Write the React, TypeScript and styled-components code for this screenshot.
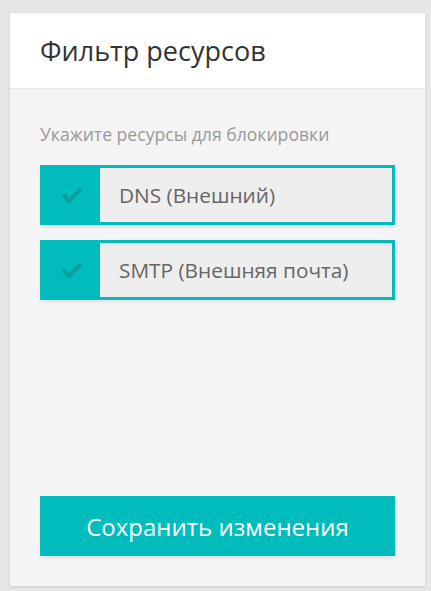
import { FC } from "react";
import styled, { createGlobalStyle } from "styled-components";

const teal = "#00bcbc";

const GlobalStyle = createGlobalStyle`
	html, body {
		margin: 0;
		padding: 0;
		background: #e6e6e6;
		font-family: "Open Sans", "Liberation Sans", sans-serif;
	}
	* { box-sizing: border-box; }
`;

const resources = [
	{ id: "dns", label: "DNS (Внешний)", checked: true },
	{ id: "smtp", label: "SMTP (Внешняя почта)", checked: true },
];

const CheckIcon: FC = () => (
	<svg width="22" height="18" viewBox="0 0 22 18">
		<path
			d="M2 9 L8 15 L20 3"
			fill="none"
			stroke="#0c9d9d"
			strokeWidth="4"
			strokeLinecap="butt"
			strokeLinejoin="miter"
		/>
	</svg>
);

const App: FC = () => {
	return (
		<Page>
			<GlobalStyle />
			<Card>
				<Header>
					<Title>Фильтр ресурсов</Title>
				</Header>
				<Body>
					<Hint>Укажите ресурсы для блокировки</Hint>
					<List>
						{resources.map((r) => (
							<Option key={r.id}>
								<CheckBox>{r.checked && <CheckIcon />}</CheckBox>
								<OptionLabel>{r.label}</OptionLabel>
							</Option>
						))}
					</List>
					<SaveButton>Сохранить изменения</SaveButton>
				</Body>
			</Card>
		</Page>
	);
};

const Page = styled.div`
	min-height: 591px;
	padding: 13px 6px 5px 10px;
`;

const Card = styled.div`
	width: 415px;
	display: flex;
	flex-direction: column;
	box-shadow: 0 1px 3px rgba(0, 0, 0, 0.12);
`;

const Header = styled.div`
	background: #fff;
	height: 76px;
	padding: 0 30px;
	display: flex;
	align-items: center;
	border-bottom: 1px solid #e8e8e8;
`;

const Title = styled.h1`
	margin: 0;
	font-size: 27px;
	font-weight: 400;
	color: #333;
	line-height: 36px;
`;

const Hint = styled.div`
	font-size: 17.6px;
	color: #999;
	line-height: 24px;
	margin-bottom: 19px;
`;

const Body = styled.div`
	background: #f4f4f4;
	height: 497px;
	padding: 33px 30px 0;
	display: flex;
	flex-direction: column;
`;

const List = styled.div`
	display: flex;
	flex-direction: column;
	gap: 15px;
	flex: 1;
`;

const Option = styled.label`
	display: flex;
	width: 355px;
	height: 60px;
	background: ${teal};
	padding: 3px 3px 3px 0;
	box-shadow: 0 2px 3px rgba(0, 0, 0, 0.08);
	cursor: pointer;
`;

const CheckBox = styled.span`
	width: 60px;
	flex: none;
	display: flex;
	align-items: center;
	justify-content: center;
	padding-left: 4px;
`;

const OptionLabel = styled.span`
	flex: 1;
	background: #eeeeee;
	display: flex;
	align-items: center;
	padding-left: 19px;
	font-size: 20.8px;
	color: #666;
`;

const SaveButton = styled.button`
	width: 355px;
	height: 60px;
	border: none;
	background: ${teal};
	color: #fff;
	font-family: inherit;
	font-size: 24px;
	margin-bottom: 30px;
	box-shadow: 0 2px 3px rgba(0, 0, 0, 0.08);
	cursor: pointer;
`;

export default App;
